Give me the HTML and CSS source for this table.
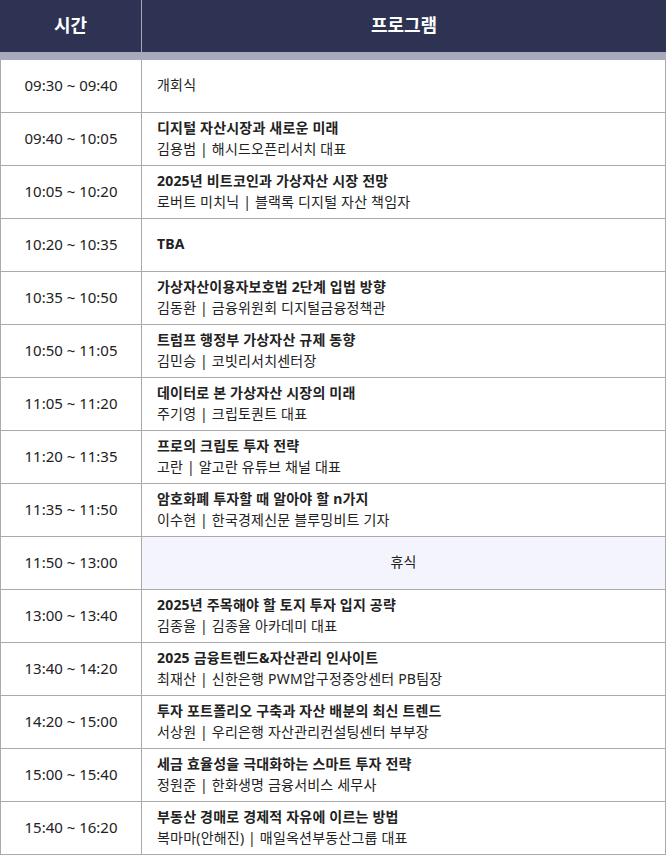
FILE: index.html
```html
<!DOCTYPE html>
<html lang="ko">
<head>
<meta charset="utf-8">
<link rel="stylesheet" href="styles.css">
</head>
<body>
<div class="schedule">
  <div class="head">
    <div class="head-time">시간</div>
    <div class="head-prog">프로그램</div>
  </div>
  <div class="row"><div class="time">09:30 ~ 09:40</div><div class="prog"><div class="plain">개회식</div></div></div>
  <div class="row"><div class="time">09:40 ~ 10:05</div><div class="prog"><div class="title">디지털 자산시장과 새로운 미래</div><div class="sub">김용범 | 해시드오픈리서치 대표</div></div></div>
  <div class="row"><div class="time">10:05 ~ 10:20</div><div class="prog"><div class="title">2025년 비트코인과 가상자산 시장 전망</div><div class="sub">로버트 미치닉 | 블랙록 디지털 자산 책임자</div></div></div>
  <div class="row"><div class="time">10:20 ~ 10:35</div><div class="prog"><div class="title">TBA</div></div></div>
  <div class="row"><div class="time">10:35 ~ 10:50</div><div class="prog"><div class="title">가상자산이용자보호법 2단계 입법 방향</div><div class="sub">김동환 | 금융위원회 디지털금융정책관</div></div></div>
  <div class="row"><div class="time">10:50 ~ 11:05</div><div class="prog"><div class="title">트럼프 행정부 가상자산 규제 동향</div><div class="sub">김민승 | 코빗리서치센터장</div></div></div>
  <div class="row"><div class="time">11:05 ~ 11:20</div><div class="prog"><div class="title">데이터로 본 가상자산 시장의 미래</div><div class="sub">주기영 | 크립토퀀트 대표</div></div></div>
  <div class="row"><div class="time">11:20 ~ 11:35</div><div class="prog"><div class="title">프로의 크립토 투자 전략</div><div class="sub">고란 | 알고란 유튜브 채널 대표</div></div></div>
  <div class="row"><div class="time">11:35 ~ 11:50</div><div class="prog"><div class="title">암호화폐 투자할 때 알아야 할 n가지</div><div class="sub">이수현 | 한국경제신문 블루밍비트 기자</div></div></div>
  <div class="row"><div class="time">11:50 ~ 13:00</div><div class="prog break"><div class="plain">휴식</div></div></div>
  <div class="row"><div class="time">13:00 ~ 13:40</div><div class="prog"><div class="title">2025년 주목해야 할 토지 투자 입지 공략</div><div class="sub">김종율 | 김종율 아카데미 대표</div></div></div>
  <div class="row"><div class="time">13:40 ~ 14:20</div><div class="prog"><div class="title">2025 금융트렌드&amp;자산관리 인사이트</div><div class="sub">최재산 | 신한은행 PWM압구정중앙센터 PB팀장</div></div></div>
  <div class="row"><div class="time">14:20 ~ 15:00</div><div class="prog"><div class="title">투자 포트폴리오 구축과 자산 배분의 최신 트렌드</div><div class="sub">서상원 | 우리은행 자산관리컨설팅센터 부부장</div></div></div>
  <div class="row"><div class="time">15:00 ~ 15:40</div><div class="prog"><div class="title">세금 효율성을 극대화하는 스마트 투자 전략</div><div class="sub">정원준 | 한화생명 금융서비스 세무사</div></div></div>
  <div class="row"><div class="time">15:40 ~ 16:20</div><div class="prog"><div class="title">부동산 경매로 경제적 자유에 이르는 방법</div><div class="sub">복마마(안해진) | 매일옥션부동산그룹 대표</div></div></div>
</div>
</body>
</html>
```

FILE: styles.css
```css
* { box-sizing: border-box; }
html, body { margin: 0; padding: 0; background: #fff; }
body {
  font-family: "Noto Sans", "Noto Sans CJK KR", sans-serif;
  color: #222;
}
.schedule { width: 666px; }
.head {
  display: grid;
  grid-template-columns: 142px 1fr;
  height: 60px;
  background: #2e3353;
  border-bottom: 8px solid #a9a9bb;
  color: #fff;
  font-size: 18px;
  font-weight: 700;
}
.head-time, .head-prog {
  display: flex;
  align-items: center;
  justify-content: center;
  padding-bottom: 4px;
}
.head-time { border-right: 1px solid #a9a9bb; }
.row {
  display: grid;
  grid-template-columns: 141px 1fr;
  height: 53px;
  border-left: 1px solid #aaa;
  border-right: 1px solid #aaa;
  border-bottom: 1px solid #aaa;
}
.time {
  border-right: 1px solid #aaa;
  display: flex;
  align-items: center;
  justify-content: center;
  font-size: 15px;
  padding-bottom: 2px;
}
.prog {
  display: flex;
  flex-direction: column;
  justify-content: center;
  padding-left: 15px;
  padding-bottom: 3px;
  font-size: 14px;
  line-height: 21px;
  letter-spacing: 0.2px;
}
.title { font-weight: 700; }
.break { background: #f4f4fc; align-items: center; padding-left: 0; }
```
